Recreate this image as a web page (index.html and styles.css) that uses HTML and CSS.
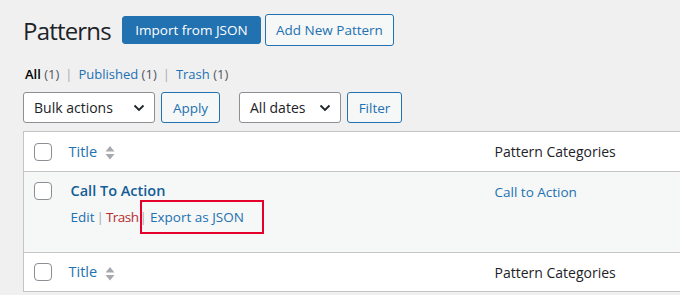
FILE: index.html
```html
<!doctype html>
<html lang="en">
<head>
  <meta charset="utf-8">
  <title>Patterns</title>
  <link rel="stylesheet" href="styles.css">
</head>
<body>
  <div class="wrap">
    <div class="page-head">
      <h1>Patterns</h1>
      <a class="btn btn-primary" href="#">Import from JSON</a>
      <a class="btn btn-secondary" href="#">Add New Pattern</a>
    </div>

    <ul class="subsubsub">
      <li><a class="current" href="#">All</a> <span class="count">(1)</span></li>
      <li class="sep">|</li>
      <li><a href="#">Published <span class="count">(1)</span></a></li>
      <li class="sep">|</li>
      <li><a href="#">Trash <span class="count">(1)</span></a></li>
    </ul>

    <div class="tablenav">
      <div class="select select-bulk">Bulk actions
        <svg class="chev" width="12" height="8" viewBox="0 0 12 8"><polyline points="1.5,1.5 6,6 10.5,1.5" fill="none" stroke="#1d2327" stroke-width="1.8"/></svg>
      </div>
      <button class="btn btn-secondary btn-apply">Apply</button>
      <div class="select select-dates">All dates
        <svg class="chev" width="12" height="8" viewBox="0 0 12 8"><polyline points="1.5,1.5 6,6 10.5,1.5" fill="none" stroke="#1d2327" stroke-width="1.8"/></svg>
      </div>
      <button class="btn btn-secondary btn-filter">Filter</button>
    </div>

    <table class="list-table">
      <thead>
        <tr>
          <td class="col-cb"><span class="cb"></span></td>
          <th class="col-title"><a href="#">Title</a>
            <svg class="sort" width="10" height="16" viewBox="0 0 10 16"><polygon points="5,1 9.5,6.5 0.5,6.5" fill="#a7aaad"/><polygon points="0.5,9 9.5,9 5,14.5" fill="#a7aaad"/></svg>
          </th>
          <th class="col-cat">Pattern Categories</th>
        </tr>
      </thead>
      <tbody>
        <tr class="alt">
          <td class="col-cb"><span class="cb"></span></td>
          <td class="col-title">
            <a class="row-title" href="#">Call To Action</a>
            <div class="row-actions">
              <a href="#">Edit</a><span class="bar bar-wide">|</span><a class="danger" href="#">Trash</a><span class="bar">|</span><span class="export"><a href="#">Export as JSON</a><span class="callout"></span></span>
            </div>
          </td>
          <td class="col-cat"><a href="#">Call to Action</a></td>
        </tr>
      </tbody>
      <tfoot>
        <tr>
          <td class="col-cb"><span class="cb"></span></td>
          <th class="col-title"><a href="#">Title</a>
            <svg class="sort" width="10" height="16" viewBox="0 0 10 16"><polygon points="5,1 9.5,6.5 0.5,6.5" fill="#a7aaad"/><polygon points="0.5,9 9.5,9 5,14.5" fill="#a7aaad"/></svg>
          </th>
          <th class="col-cat">Pattern Categories</th>
        </tr>
      </tfoot>
    </table>
  </div>
</body>
</html>
```

FILE: styles.css
```css
:root{ --bg:#f0f0f1; --link:#2271b1; --link-dark:#135e96; --border:#c3c4c7; --text:#1d2327; --danger:#b32d2e; }
*{ box-sizing:border-box; }
body{ margin:0; background:var(--bg); color:var(--text); font-family:"Open Sans","Noto Sans",sans-serif; font-size:14px; overflow:hidden; }
a{ color:var(--link); text-decoration:none; }
.wrap{ padding:0 0 0 23px; width:760px; }

.page-head{ display:flex; align-items:center; height:60px; }
.page-head h1{ font-size:24px; font-weight:400; margin:0 11px 0 0; letter-spacing:-0.8px; }
.btn{ display:inline-flex; align-items:center; justify-content:center; border-radius:3px; font-family:inherit; font-size:13.5px; cursor:pointer; white-space:nowrap; padding:0; }
.btn-primary{ background:#2271b1; color:#fff; border:1px solid #2271b1; height:28px; width:139px; margin-right:4px; }
.btn-secondary{ background:#f6f7f7; color:var(--link); border:1px solid var(--link); height:32px; width:129px; }

.subsubsub{ list-style:none; display:flex; gap:6px; margin:0; padding:0 0 0 2px; height:27px; align-items:center; font-size:13px; color:#50575e; }
.subsubsub .current{ color:#000; font-weight:600; }
.subsubsub .count{ color:#50575e; }
.subsubsub .sep{ color:#a7aaad; }

.tablenav{ display:flex; align-items:center; height:41px; gap:6px; }
.select{ display:flex; align-items:center; justify-content:space-between; height:31px; background:#fff; border:1px solid #8c8f94; border-radius:3px; padding:0 9px 0 10px; font-size:14px; color:var(--text); }
.select-bulk{ width:132px; }
.select-dates{ width:102px; margin-left:13px; }
.btn-apply, .btn-filter{ height:31px; font-size:13.5px; }
.btn-apply{ width:59px; }
.btn-filter{ width:55px; }

.list-table{ margin-top:3px; width:740px; border:1px solid var(--border); border-collapse:collapse; background:#fff; }
.list-table td, .list-table th{ padding:0; text-align:left; font-weight:400; vertical-align:middle; }
.list-table thead tr{ height:40px; border-bottom:1px solid var(--border); }
.list-table tfoot tr{ height:39px; border-top:1px solid var(--border); }
.list-table tbody tr{ height:81px; }
.list-table tr.alt{ background:#f6f7f7; }
.list-table .col-cb{ width:45px; padding-left:10px; }
.list-table .col-title{ width:426px; font-size:14.5px; }
.list-table .col-cat{ font-size:14px; color:var(--text); }
.cb{ display:block; width:18px; height:18px; border:1px solid #8c8f94; border-radius:4px; background:#fff; }
.sort{ vertical-align:middle; margin-left:4px; }

.list-table tbody td{ vertical-align:top; }
.list-table tbody .col-cb{ padding-top:10px; }
.list-table tbody .col-title{ padding:9px 0 0 2px; }
.list-table tbody .col-cat{ padding-top:11px; font-size:13.5px; }
.row-title{ font-weight:600; font-size:14.5px; color:var(--link-dark); }
.row-actions{ display:flex; align-items:center; margin-top:8px; font-size:13.5px; }
.row-actions .bar{ color:#a7aaad; padding:0 3px 0 1px; }
.row-actions .bar-wide{ padding:0 2px; }
.row-actions .danger{ color:var(--danger); letter-spacing:-0.5px; }
.export{ position:relative; }
.callout{ position:absolute; left:-10px; right:-20px; top:-8px; bottom:-8px; border:2px solid #e4002b; }
```
